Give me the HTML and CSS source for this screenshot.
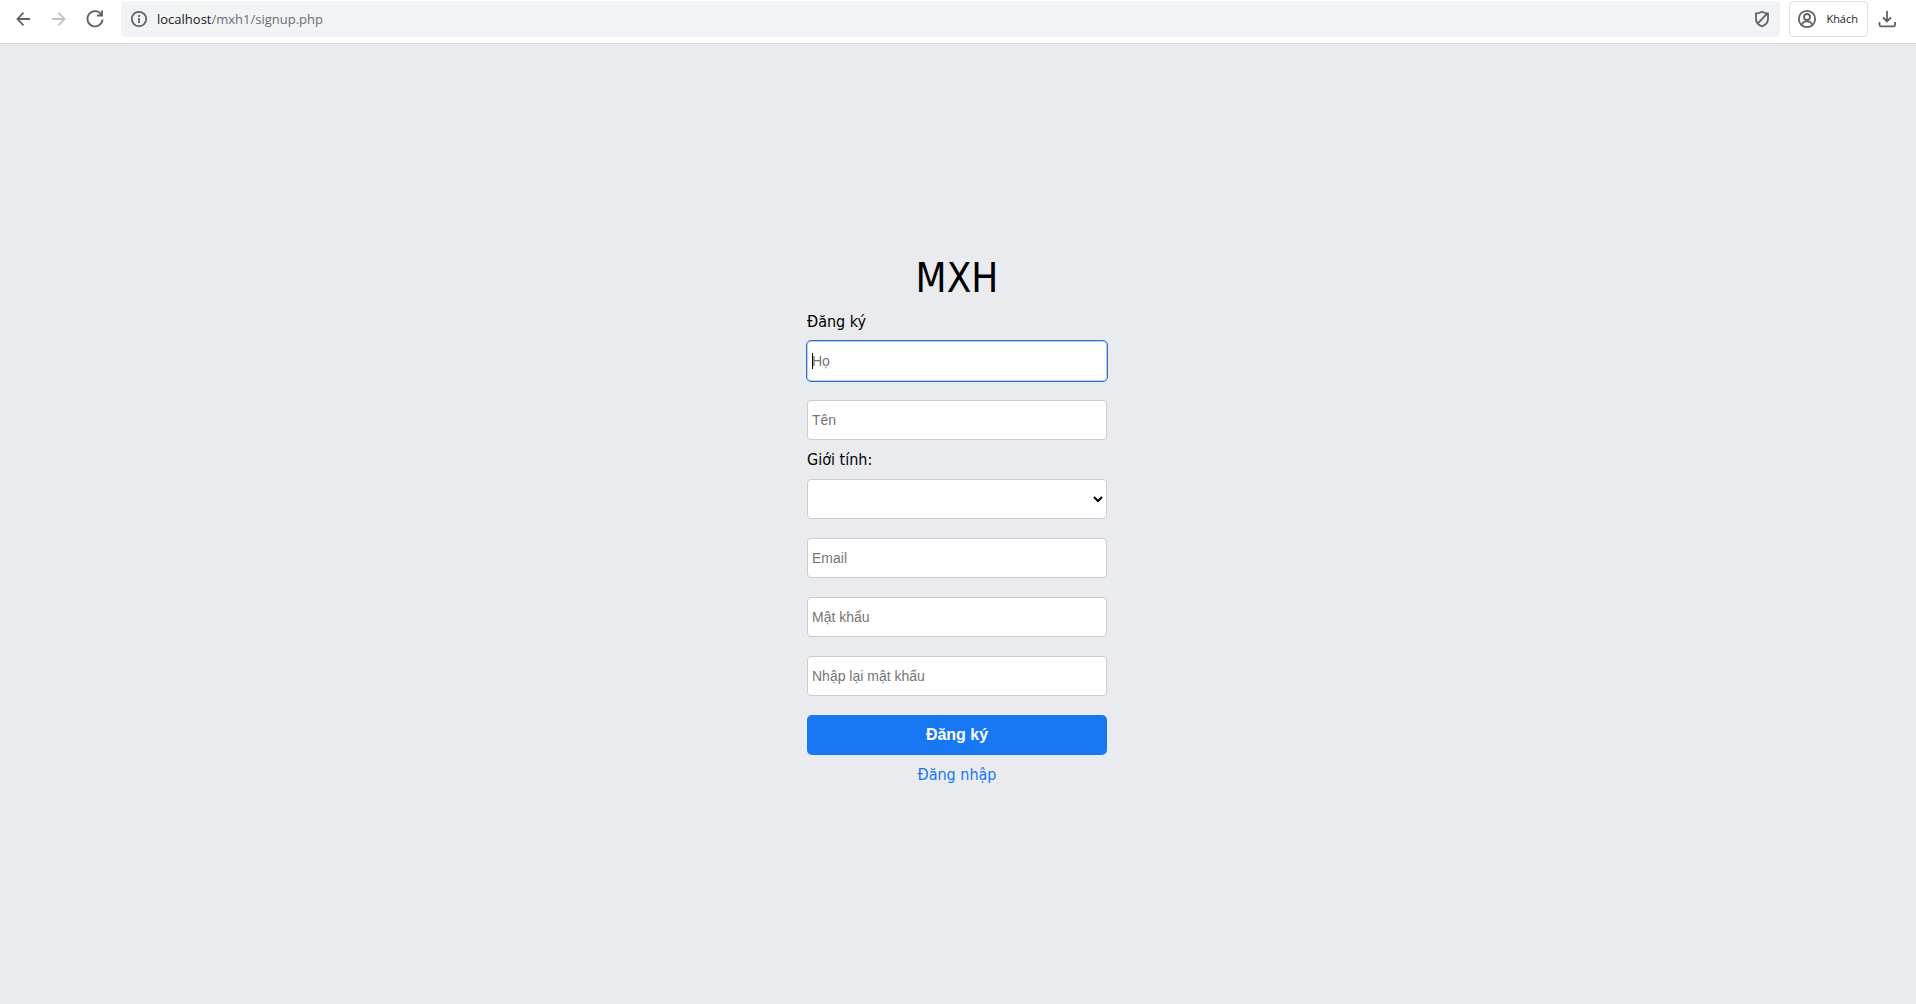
FILE: index.html
```html
<!DOCTYPE html>
<html lang="vi">
<head>
<meta charset="utf-8">
<title>MXH - Đăng ký</title>
<link rel="stylesheet" href="styles.css">
</head>
<body>
<header class="toolbar">
  <nav class="nav">
    <button class="icon-button" type="button" aria-label="Back">
      <svg width="20" height="20" viewBox="0 0 20 20"><path d="M17 10H5M10.500 3.700L4.500 10l6 6.300"/></svg>
    </button>
    <button class="icon-button" type="button" aria-label="Forward" disabled>
      <svg width="20" height="20" viewBox="0 0 20 20"><path d="M3 10h12M9.500 3.700L15.500 10l-6 6.300"/></svg>
    </button>
    <button class="icon-button" type="button" aria-label="Reload">
      <svg width="20" height="20" viewBox="0 0 20 20"><path d="M16.300 5.500A7.600 7.600 0 1 0 17.600 10.500M17 1.500v5h-5"/></svg>
    </button>
  </nav>
  <div class="address">
    <svg width="18" height="18" viewBox="0 0 18 18"><circle cx="9" cy="9" r="7.200"/><path d="M9 8v5M9 5v2"/></svg>
    <span class="url"><span class="host">localhost</span>/mxh1/signup.php</span>
    <svg width="18" height="18" viewBox="0 0 18 18"><path d="M9 1.800c2 1.200 4 1.700 6 1.700v5.200c0 3.800-2.500 6.300-6 7.600-3.500-1.300-6-3.800-6-7.600V3.500c2 0 4-.5 6-1.700zM4.700 13.700L13.800 3.800"/></svg>
  </div>
  <button class="profile" type="button">
    <svg width="20" height="20" viewBox="0 0 20 20"><circle cx="10" cy="10" r="8.200"/><circle cx="10" cy="8" r="3"/><path d="M4.500 16c1-2.600 3-3.700 5.500-3.700s4.500 1.100 5.500 3.700"/></svg>
    Khách
  </button>
  <button class="icon-button" type="button" aria-label="Downloads">
    <svg width="20" height="20" viewBox="0 0 20 20"><path d="M10 2v10M6 8.500l4 4 4-4M2.500 13v2.800c0 1 .6 1.500 1.500 1.500h12.600c.9 0 1.500-.5 1.500-1.500V13"/></svg>
  </button>
</header>
<main class="page">
  <form class="signup">
    <h1 class="brand">MXH</h1>
    <p class="caption">Đăng ký</p>
    <div class="fields">
      <div class="focused">
        <input class="field" type="text" placeholder="Họ" aria-label="Họ">
        <span class="caret"></span>
      </div>
      <input class="field" type="text" placeholder="Tên" aria-label="Tên">
    </div>
    <label class="caption" for="gender">Giới tính:</label>
    <div class="fields">
      <select class="field" id="gender">
        <option selected></option>
        <option>Nam</option>
        <option>Nữ</option>
      </select>
      <input class="field" type="email" placeholder="Email" aria-label="Email">
      <input class="field" type="password" placeholder="Mật khẩu" aria-label="Mật khẩu">
      <input class="field" type="password" placeholder="Nhập lại mật khẩu" aria-label="Nhập lại mật khẩu">
      <button class="submit" type="submit">Đăng ký</button>
    </div>
    <a class="login" href="#">Đăng nhập</a>
  </form>
</main>
</body>
</html>
```
FILE: styles.css
```css
* { box-sizing: border-box; }

body {
  margin: 0;
  min-height: 100vh;
  display: flex;
  flex-direction: column;
  background: #e9ebee;
  color: #000;
  font: 16px/19px Tahoma, "DejaVu Sans Condensed", sans-serif;
}

svg {
  display: block;
  flex: none;
  fill: none;
  stroke: #5f6368;
  stroke-width: 1.8;
}

.toolbar {
  display: flex;
  align-items: center;
  gap: 9px;
  height: 44px;
  padding: 0 19px 6px 13px;
  background: #fff;
  border-bottom: 1px solid #d5d8dc;
}

.nav {
  display: flex;
  gap: 16px;
  padding-right: 7px;
}

.icon-button {
  padding: 0;
  border: 0;
  background: none;
}

.icon-button:disabled { opacity: 0.4; }

.address {
  flex: 1;
  display: flex;
  align-items: center;
  gap: 9px;
  height: 36px;
  padding: 0 9px;
  border-radius: 4px;
  background: #f1f3f4;
}

.url {
  flex: 1;
  color: #6b6f74;
  font: 13px/20px "Segoe UI", "Open Sans", sans-serif;
}

.host { color: #202124; }

.profile {
  display: flex;
  align-items: center;
  gap: 9px;
  height: 36px;
  padding: 0 9px 0 7px;
  border: 1px solid #dfe1e5;
  border-radius: 4px;
  background: #fff;
  color: #202124;
  font: 11px/16px "Segoe UI", "Open Sans", sans-serif;
}

.page {
  flex: 1;
  display: flex;
  align-items: center;
  justify-content: center;
  padding: 0 2px 10px 0;
}

.signup {
  display: flex;
  flex-direction: column;
  gap: 10px;
  width: 300px;
}

.brand {
  margin: 0;
  font-size: 40px;
  line-height: 48px;
  font-weight: 400;
  text-align: center;
}

.caption { margin: 0; }

.fields {
  display: flex;
  flex-direction: column;
  gap: 19px;
}

.field {
  display: block;
  width: 100%;
  height: 40px;
  padding: 4px;
  border: 1px solid #ccc;
  border-radius: 4px;
  background-color: #fff;
  color: #000;
  font: 14px "Liberation Sans", Arial, sans-serif;
}

.field::placeholder { color: #757575; }

.focused { position: relative; }

.focused .field { outline: 1px solid #1a73e8; }

.caret {
  position: absolute;
  left: 5px;
  top: 12px;
  width: 1px;
  height: 16px;
  background: #000;
}

.submit {
  height: 40px;
  border: 0;
  border-radius: 5px;
  background: #1877f2;
  color: #fff;
  font: bold 16px "Liberation Sans", Arial, sans-serif;
}

.login {
  align-self: center;
  color: #1877f2;
  text-decoration: none;
}
```
